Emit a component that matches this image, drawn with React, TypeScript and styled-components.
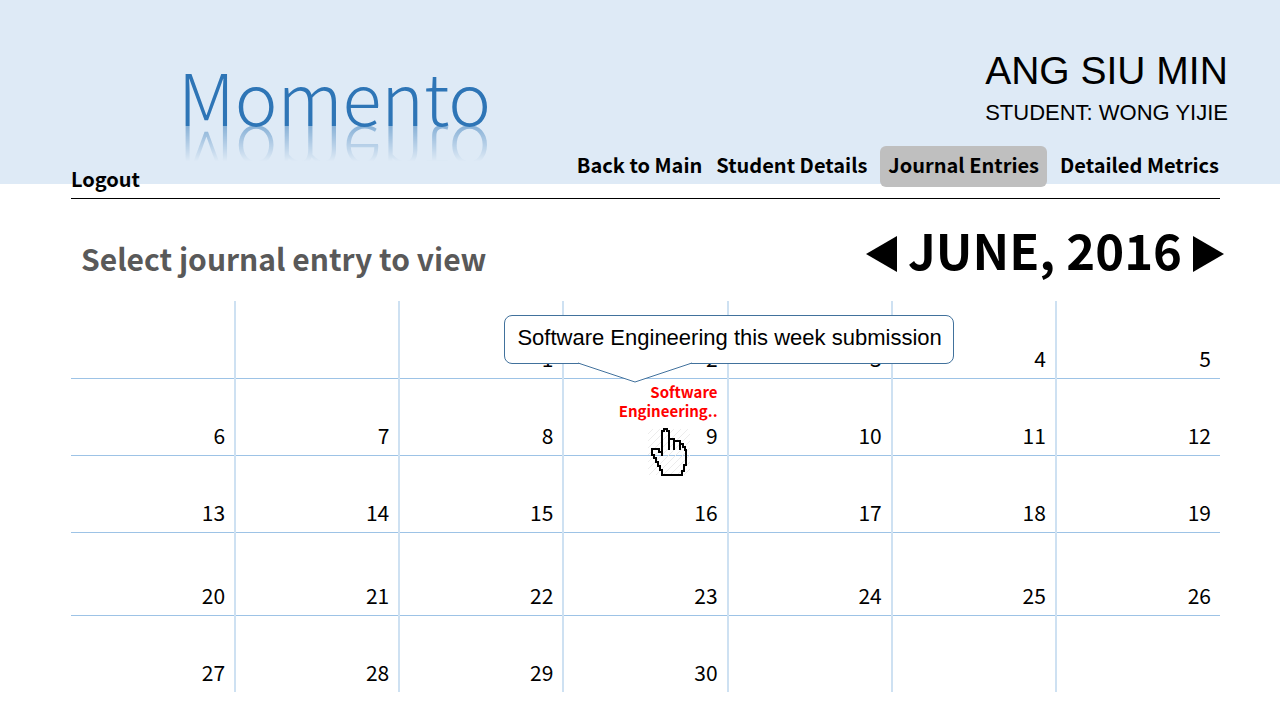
import React from 'react';
import styled, { createGlobalStyle } from 'styled-components';

const GlobalStyle = createGlobalStyle`
  * { box-sizing: border-box; }
  body {
    margin: 0;
    background: #fff;
    color: #000;
    font-family: "Noto Sans CJK JP", "Noto Sans", sans-serif;
  }
`;

const arial = '"Liberation Sans", Arial, sans-serif';

const Page = styled.div`
  min-height: 100vh;
`;

const Header = styled.header`
  padding: 0 60px 0 71px;
  background: linear-gradient(#deeaf6 184px, transparent 184px);
`;

const HeaderInner = styled.div`
  display: flex;
  justify-content: space-between;
  height: 199px;
  border-bottom: 1px solid #000;
`;

const Brand = styled.div`
  display: flex;
  flex-direction: column;
  justify-content: space-between;
  padding: 41px 0 4px;
`;

const Logo = styled.div`
  padding-left: 107px;
  color: #2e75b6;
  font-size: 72px;
  font-weight: 300;
  line-height: 108px;
  -webkit-box-reflect: below -46px linear-gradient(transparent 46%, rgba(0, 0, 0, 0.8));
`;

const Account = styled.div`
  display: flex;
  flex-direction: column;
  align-items: flex-end;
  padding-top: 44px;
`;

const Identity = styled.div`
  margin: 0 -8px 18px 0;
  font-family: ${arial};
`;

const ParentName = styled.div`
  font-size: 39px;
  line-height: 54px;
`;

const StudentName = styled.div`
  font-size: 22px;
  line-height: 30px;
`;

const Nav = styled.nav`
  display: flex;
  gap: 12px;
`;

const NavLink = styled.a<{ $active?: boolean }>`
  padding: 0 ${p => (p.$active ? 8 : 1)}px 4px;
  border-radius: 6px;
  background: ${p => (p.$active ? '#bfbfbf' : 'transparent')};
  color: #000;
  font-size: 20px;
  font-weight: 700;
  line-height: 37px;
  white-space: nowrap;
  text-decoration: none;
`;

const LogoutLink = styled(NavLink)`
  align-self: flex-start;
  padding: 0;
  line-height: 30px;
`;

const Main = styled.main`
  padding: 20px 60px 28px 71px;
`;

const TitleRow = styled.div`
  display: flex;
  justify-content: space-between;
  align-items: center;
  height: 70px;
  margin: 0 -4px 12px 10px;
`;

const Prompt = styled.h1`
  margin: 8px 0 0;
  color: #595959;
  font-size: 30px;
  font-weight: 700;
  line-height: 40px;
`;

const MonthPicker = styled.div`
  display: flex;
  align-items: center;
  gap: 11px;
`;

const Month = styled.h2`
  margin: 0;
  padding-bottom: 10px;
  font-size: 49px;
  font-weight: 700;
  line-height: 60px;
`;

const ArrowButton = styled.button`
  padding: 0;
  border: 0;
  background: none;
  cursor: pointer;
  svg { display: block; }
`;

const Calendar = styled.table`
  width: 100%;
  table-layout: fixed;
  border-collapse: collapse;
`;

const Week = styled.tr<{ $tall?: boolean }>`
  height: ${p => (p.$tall ? 83 : 77)}px;
`;

const Day = styled.td`
  position: relative;
  padding: 0 9px 6px 0;
  border: 0 solid #9dc3e6;
  border-bottom-width: 1px;
  border-right: 2px solid #cee1f2;
  font-size: 21px;
  line-height: 28px;
  text-align: right;
  vertical-align: bottom;
  &:last-child { border-right: 0; }
  tr:last-child > & { border-bottom: 0; }
`;

const Entry = styled.a`
  display: block;
  margin: 0 0 1px 44px;
  color: #f00;
  font-size: 15px;
  font-weight: 700;
  line-height: 19px;
  text-decoration: none;
`;

const Tooltip = styled.div`
  position: absolute;
  z-index: 1;
  left: -60px;
  top: -64px;
  padding: 0 11px 3px 12px;
  border: 1px solid #41719c;
  border-radius: 8px;
  background: #fff;
  font-family: ${arial};
  font-size: 22px;
  line-height: 44px;
  white-space: nowrap;
`;

const TooltipTail = styled.svg`
  position: absolute;
  left: 73px;
  top: 46px;
`;

const Pointer = styled.svg`
  position: absolute;
  left: 84px;
  top: 48px;
  z-index: 1;
`;

const weeks: (number | null)[][] = [
  [null, null, 1, 2, 3, 4, 5],
  [6, 7, 8, 9, 10, 11, 12],
  [13, 14, 15, 16, 17, 18, 19],
  [20, 21, 22, 23, 24, 25, 26],
  [27, 28, 29, 30, null, null, null],
];

const HandPointer = () => (
  <Pointer width="44" height="50" viewBox="0 0 44 50" aria-hidden="true">
    <defs>
      <pattern id="hatch" width="7" height="7" patternUnits="userSpaceOnUse">
        <path d="M-1 8L8 -1" stroke="#ececec" strokeWidth="1" />
      </pattern>
    </defs>
    <rect y="2" width="42" height="46" fill="url(#hatch)" />
    <path
      d="M14 29V4h2V2h3v2h2v19M21 12h5v11M26 14h6v9M32 17h3v3h2v3h1v15h-2v6h-2v4H14v-5h-2v-4h-2v-4H8v-4H6v-3H4v-6h7v3h3"
      fill="none"
      stroke="#000"
      strokeWidth="2"
      shapeRendering="crispEdges"
    />
  </Pointer>
);

export default function App() {
  return (
    <Page>
      <GlobalStyle />
      <Header>
        <HeaderInner>
          <Brand>
            <Logo>Momento</Logo>
            <LogoutLink href="#logout">Logout</LogoutLink>
          </Brand>
          <Account>
            <Identity>
              <ParentName>ANG SIU MIN</ParentName>
              <StudentName>STUDENT: WONG YIJIE</StudentName>
            </Identity>
            <Nav>
              <NavLink href="#main">Back to Main</NavLink>
              <NavLink href="#student">Student Details</NavLink>
              <NavLink href="#journal" $active aria-current="page">Journal Entries</NavLink>
              <NavLink href="#metrics">Detailed Metrics</NavLink>
            </Nav>
          </Account>
        </HeaderInner>
      </Header>
      <Main>
        <TitleRow>
          <Prompt>Select journal entry to view</Prompt>
          <MonthPicker>
            <ArrowButton aria-label="Previous month">
              <svg width="31" height="36" viewBox="0 0 31 36"><path d="M31 0V36L0 18Z" /></svg>
            </ArrowButton>
            <Month>JUNE, 2016</Month>
            <ArrowButton aria-label="Next month">
              <svg width="31" height="36" viewBox="0 0 31 36"><path d="M0 0V36L31 18Z" /></svg>
            </ArrowButton>
          </MonthPicker>
        </TitleRow>
        <Calendar aria-label="June 2016">
          <tbody>
            {weeks.map((week, w) => (
              <Week key={w} $tall={w === 3}>
                {week.map((day, d) => (
                  <Day key={d}>
                    {day === 9 && (
                      <>
                        <Tooltip role="tooltip">
                          Software Engineering this week submission
                          <TooltipTail width="114" height="22" viewBox="0 0 114 22" aria-hidden="true">
                            <path d="M0 0H114V1L57 20L0 1Z" fill="#fff" />
                            <path d="M0 1L57 20L114 1" fill="none" stroke="#41719c" />
                          </TooltipTail>
                        </Tooltip>
                        <Entry href="#entry">Software Engineering..</Entry>
                        <HandPointer />
                      </>
                    )}
                    {day}
                  </Day>
                ))}
              </Week>
            ))}
          </tbody>
        </Calendar>
      </Main>
    </Page>
  );
}
